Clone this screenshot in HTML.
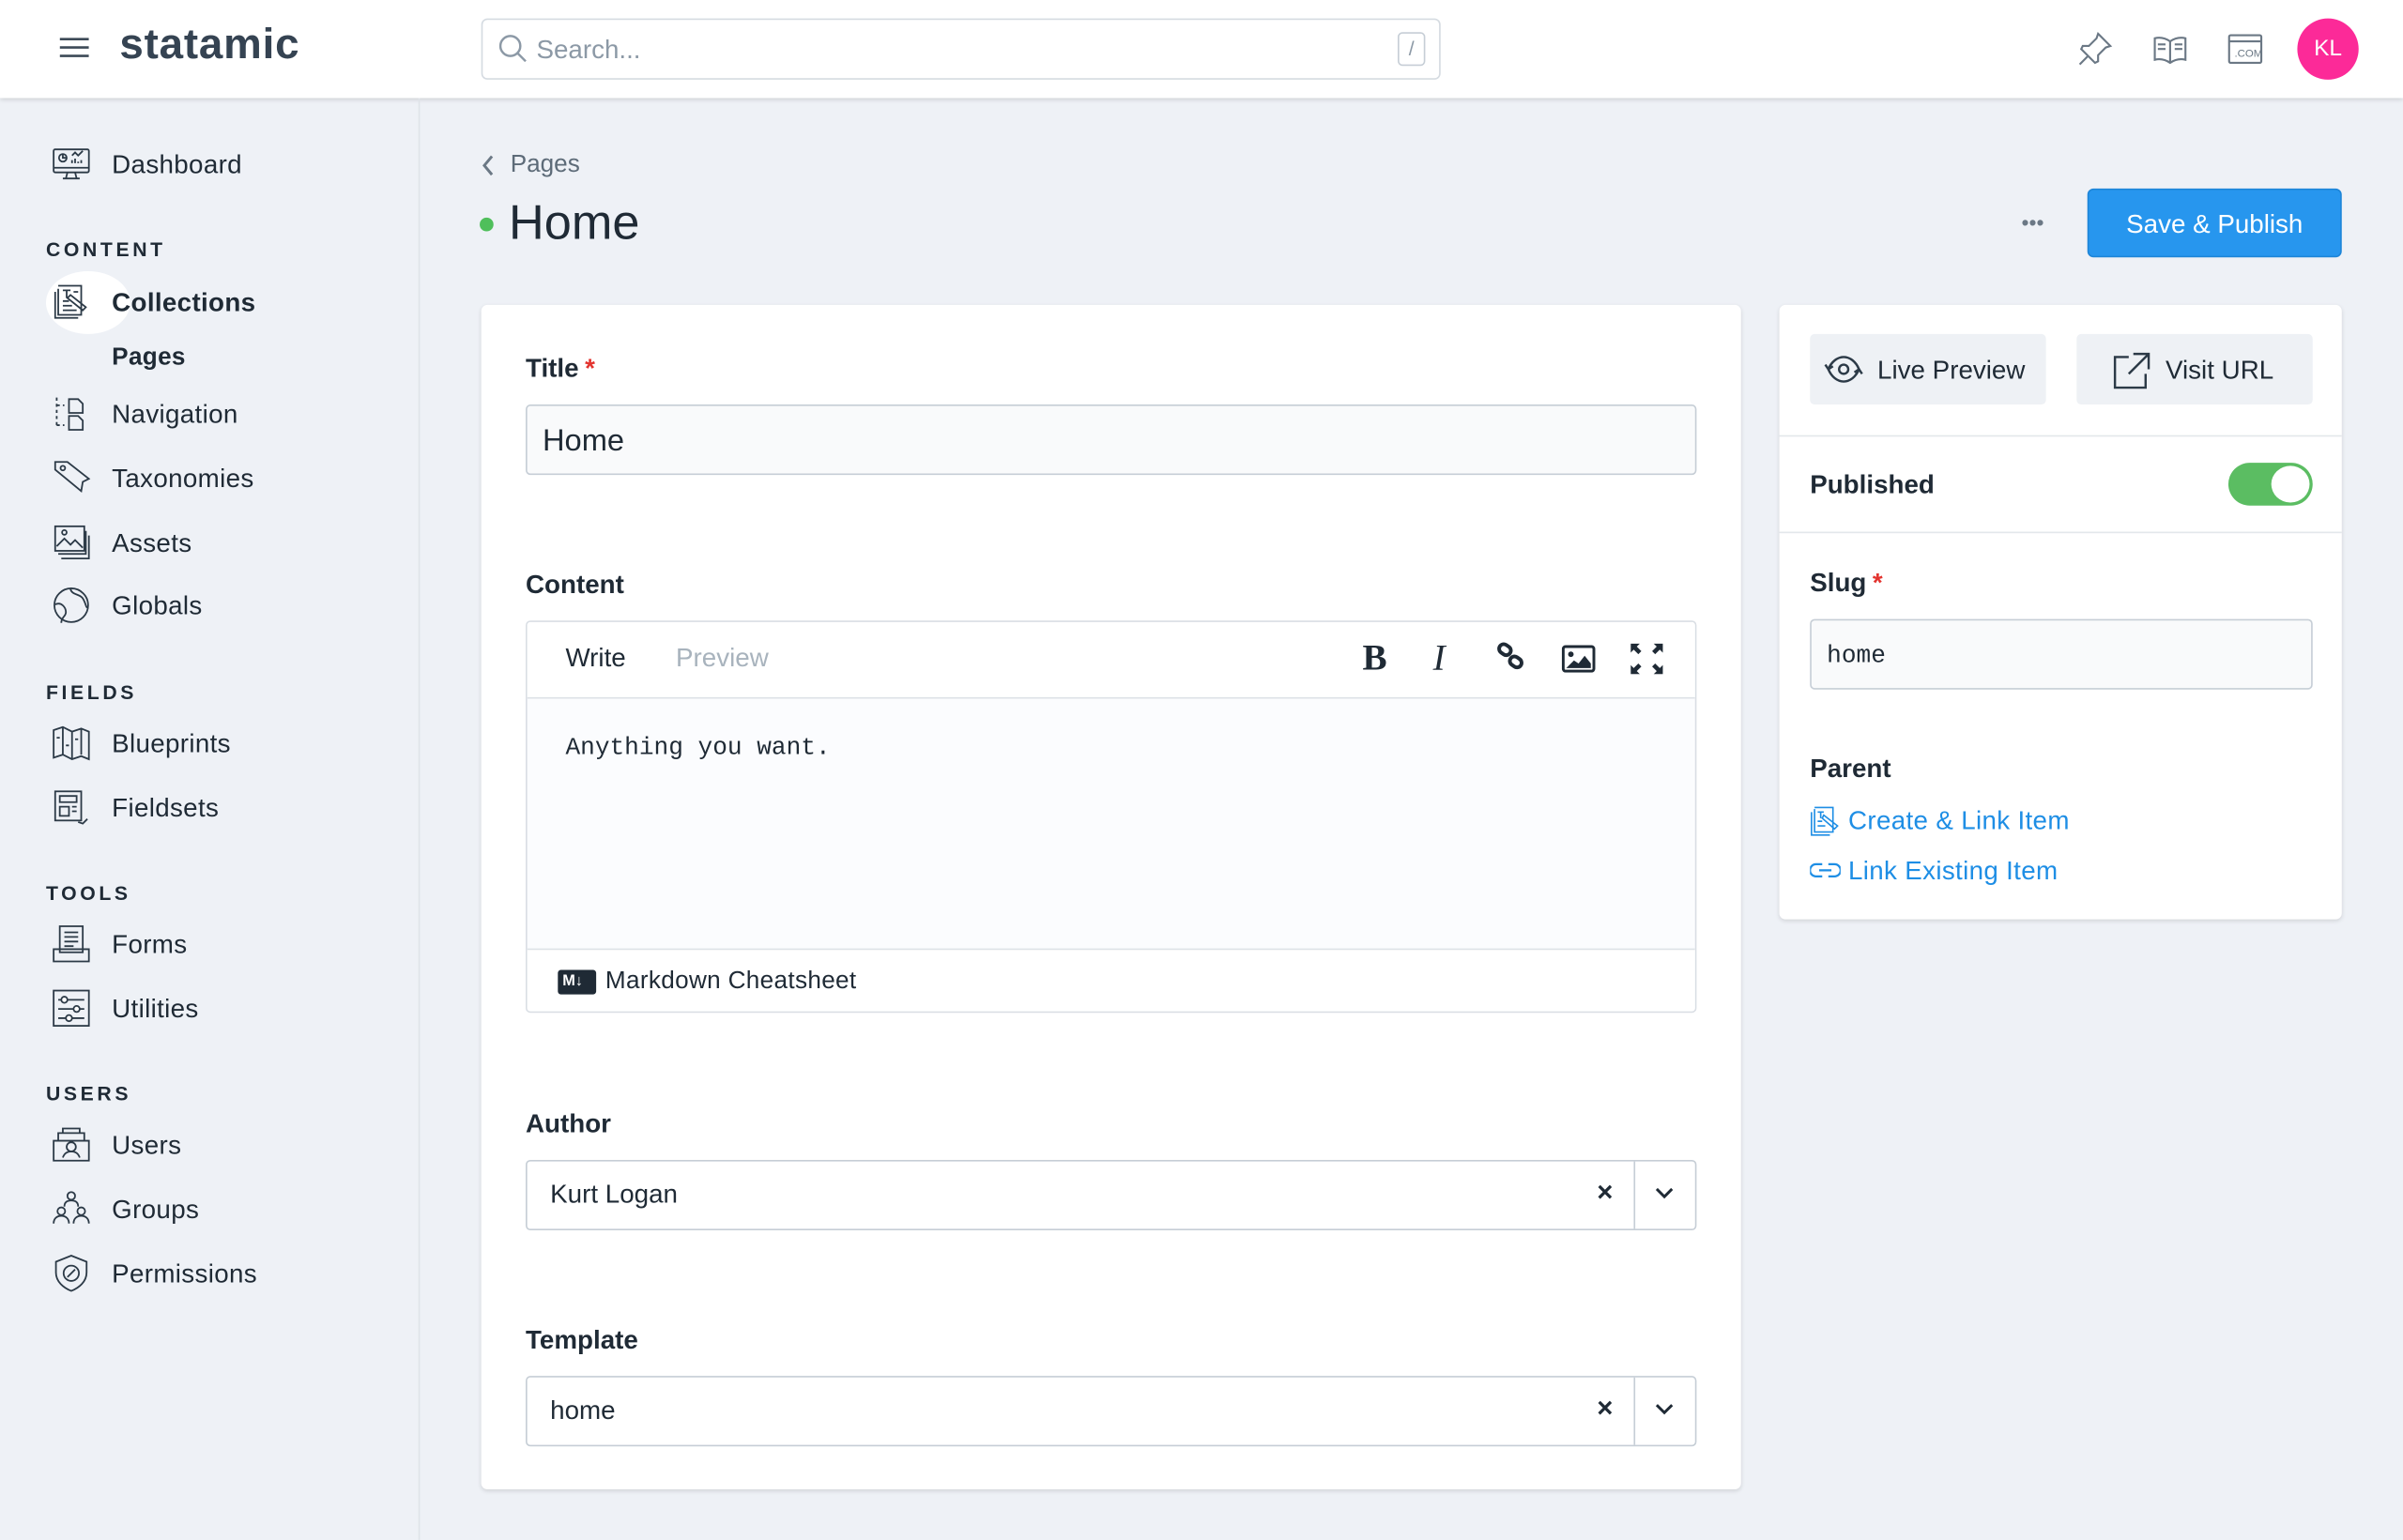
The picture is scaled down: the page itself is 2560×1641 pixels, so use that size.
<!DOCTYPE html>
<html><head><meta charset="utf-8">
<style>
*{box-sizing:border-box;margin:0;padding:0}
html,body{width:2560px;height:1640px;overflow:hidden;background:#eef1f6}
#w{position:absolute;left:0;top:0;width:1568px;height:1005px;transform:scale(1.6327);transform-origin:0 0;font-family:"Liberation Sans",sans-serif;color:#1f2a35;background:#eef1f6}
.a{position:absolute}
.hdr{left:0;top:0;width:1568px;height:64px;background:#fff;box-shadow:0 1px 3px rgba(0,0,0,.15)}
.side{left:273px;top:64px;width:1px;height:941px;background:#dfe3e8}
.ni{position:absolute;left:73px;font-size:17px;color:#1f2a35;transform:translateY(-45%);letter-spacing:.2px}
.sec{position:absolute;left:30px;font-size:13px;font-weight:bold;letter-spacing:2.2px;transform:translateY(-45%)}
.ic{position:absolute;left:34px;width:25px;height:25px;transform:translateY(-50%)}
.lab{position:absolute;font-size:17px;font-weight:bold;transform:translateY(-45%)}
.lab b{color:#e3342f;margin-left:4px}
.card{background:#fff;border-radius:4px;box-shadow:0 1px 3px rgba(0,0,0,.12)}
.inp{position:absolute;border:1px solid #c6ced6;border-radius:3px;background:#f9fafb}
svg{display:block}
</style></head><body><div id="w">
<div class="a hdr"></div>
<svg class="a" style="left:39px;top:24px" width="19" height="14"><path d="M0 1.5H19M0 7H19M0 12.5H19" stroke="#3d4a57" stroke-width="1.6"/></svg>
<div class="a" style="left:78px;top:13px;font-size:28px;font-weight:bold;color:#354352;letter-spacing:.5px">statamic</div>
<div class="a" style="left:314px;top:12px;width:626px;height:40px;border:1px solid #d5dbe1;border-radius:4px;background:#fff"></div>
<svg class="a" style="left:325px;top:22px" width="19" height="19"><circle cx="8" cy="8" r="6.5" fill="none" stroke="#8c99a6" stroke-width="1.5"/><path d="M13 13L18 18" stroke="#8c99a6" stroke-width="1.5"/></svg>
<div class="a" style="left:350px;top:23px;font-size:17px;color:#8c99a6">Search...</div>
<div class="a" style="left:912px;top:21px;width:18px;height:22px;border:1px solid #c6ced6;border-radius:3px;font-size:13px;color:#8c99a6;text-align:center;line-height:20px">/</div>
<svg class="a" style="left:1355px;top:20px" width="24" height="24" fill="none" stroke="#6b7885" stroke-width="1.3"><path d="M14 2l8 8-3 1-5 5 0 4-2 1-9-9 1-2h4l5-5z M7 17l-5 5"/></svg>
<svg class="a" style="left:1404px;top:20px" width="24" height="24" fill="none" stroke="#6b7885" stroke-width="1.3"><path d="M2 5c4-1 7 0 10 2 3-2 6-3 10-2v14c-4-1-7 0-10 2-3-2-6-3-10-2z M12 7v14 M4 9h5M4 12h5M15 9h5M15 12h5"/></svg>
<svg class="a" style="left:1453px;top:20px" width="24" height="24" fill="none" stroke="#6b7885" stroke-width="1.3"><rect x="1.5" y="3" width="21" height="18" rx="1"/><path d="M1.5 7h21"/><text x="5" y="17" font-size="7" fill="#6b7885" stroke="none" font-family="Liberation Sans">.COM</text></svg>
<div class="a" style="left:1499px;top:12px;width:40px;height:40px;border-radius:50%;background:#fc2a98;color:#fff;font-size:15px;text-align:center;line-height:40px">KL</div>

<div class="a side"></div>
<svg class="ic" style="top:107px" viewBox="0 0 25 25" fill="none" stroke="#2c3a47" stroke-width="1.1"><rect x="1" y="3" width="23" height="15" rx="1"/><path d="M1 15h23M10 18l-1 4h7l-1-4M7 22h11"/><circle cx="7" cy="8.5" r="2.5"/><path d="M7 6v2.5h2.5M13 12v-2M15 12v-3M17 12v-1M19 12v-2M13 7l2-2 2 2 3-3"/></svg>
<div class="ni" style="top:107px">Dashboard</div>
<div class="sec" style="top:162px">CONTENT</div>
<div class="a" style="left:30px;top:177px;width:55px;height:41px;border-radius:50%;background:#fff"></div>
<svg class="ic" style="top:197px" viewBox="0 0 25 25" fill="none" stroke="#2c3a47" stroke-width="1.1"><path d="M2 6v17h15M4 4v17h15V2H4M7 5h5M9.5 5v5M14 6h3M7 12h4M7 15h6M7 18h9M12 8l10 8-2 2-10-8z"/></svg>
<div class="ni" style="top:197px;font-weight:bold">Collections</div>
<div class="ni" style="top:233px;font-size:16px;font-weight:bold">Pages</div>
<svg class="ic" style="top:270px" viewBox="0 0 25 25" fill="none" stroke="#2c3a47" stroke-width="1.1"><path d="M3 2v20M3 7h5M3 20h5" stroke-dasharray="2 2"/><path d="M11 3h6l3 3v6h-9zM11 14h6l3 3v6h-9z"/></svg>
<div class="ni" style="top:270px">Navigation</div>
<svg class="ic" style="top:312px" viewBox="0 0 25 25" fill="none" stroke="#2c3a47" stroke-width="1.1"><path d="M2 2h8l14 11-4 2-1 6-17-14z"/><circle cx="7" cy="6" r="1.5"/></svg>
<div class="ni" style="top:312px">Taxonomies</div>
<svg class="ic" style="top:354px" viewBox="0 0 25 25" fill="none" stroke="#2c3a47" stroke-width="1.1"><rect x="2" y="2" width="19" height="16"/><path d="M4 20h18V5M6 23h18V8M3 15l5-5 4 4 3-3 5 5"/><circle cx="8" cy="6" r="1.5"/></svg>
<div class="ni" style="top:354px">Assets</div>
<svg class="ic" style="top:395px" viewBox="0 0 25 25" fill="none" stroke="#2c3a47" stroke-width="1.1"><circle cx="12.5" cy="12.5" r="11"/><path d="M2 12c4-2 7 2 7 5s-3 3-3 7M12 2c1 4 6 3 8 6s2 6 3 6"/></svg>
<div class="ni" style="top:395px">Globals</div>
<div class="sec" style="top:451px">FIELDS</div>
<svg class="ic" style="top:485px" viewBox="0 0 25 25" fill="none" stroke="#2c3a47" stroke-width="1.1"><path d="M1 4l6-2 6 3 6-2 5 2v18l-5-2-6 2-6-3-6 2zM7 2v18M13 5v18M19 3v17M3 9h2M15 10h2M9 14h2"/></svg>
<div class="ni" style="top:485px">Blueprints</div>
<svg class="ic" style="top:527px" viewBox="0 0 25 25" fill="none" stroke="#2c3a47" stroke-width="1.1"><rect x="2" y="2" width="17" height="19"/><path d="M5 5h11v4H5zM5 12h6v6H5zM13 12h3M13 15h3M17 22l3 1 3-3"/></svg>
<div class="ni" style="top:527px">Fieldsets</div>
<div class="sec" style="top:582px">TOOLS</div>
<svg class="ic" style="top:616px" viewBox="0 0 25 25" fill="none" stroke="#2c3a47" stroke-width="1.1"><path d="M5 1h15v17H5zM1 16h23v8H1zM8 5h9M8 8h9M8 11h9M8 14h6"/></svg>
<div class="ni" style="top:616px">Forms</div>
<svg class="ic" style="top:658px" viewBox="0 0 25 25" fill="none" stroke="#2c3a47" stroke-width="1.1"><rect x="1" y="1" width="23" height="23"/><path d="M4 7h17M4 13h17M4 19h17"/><circle cx="8" cy="7" r="2" fill="#fff"/><circle cx="16" cy="13" r="2" fill="#fff"/><circle cx="11" cy="19" r="2" fill="#fff"/></svg>
<div class="ni" style="top:658px">Utilities</div>
<div class="sec" style="top:713px">USERS</div>
<svg class="ic" style="top:747px" viewBox="0 0 25 25" fill="none" stroke="#2c3a47" stroke-width="1.1"><path d="M1 10h23v13H1zM4 10V5h17v5M7 5V2h11v3"/><circle cx="12.5" cy="14" r="3"/><path d="M7 21c1-3 3-4 5.5-4s4.5 1 5.5 4"/></svg>
<div class="ni" style="top:747px">Users</div>
<svg class="ic" style="top:789px" viewBox="0 0 25 25" fill="none" stroke="#2c3a47" stroke-width="1.1"><circle cx="12.5" cy="4" r="2.5"/><path d="M8 11c0-3 2-4 4.5-4s4.5 1 4.5 4"/><circle cx="6" cy="14" r="2.5"/><circle cx="19" cy="14" r="2.5"/><path d="M1 22c0-3 2-5 5-5s5 2 5 5M14 22c0-3 2-5 5-5s5 2 5 5"/></svg>
<div class="ni" style="top:789px">Groups</div>
<svg class="ic" style="top:831px" viewBox="0 0 25 25" fill="none" stroke="#2c3a47" stroke-width="1.1"><path d="M12.5 1l10 4v7c0 6-5 10-10 12C7.5 22 2.5 18 2.5 12V5z"/><circle cx="12.5" cy="12.5" r="5"/><path d="M10 15l5-5"/></svg>
<div class="ni" style="top:831px">Permissions</div>

<svg class="a" style="left:314px;top:101px" width="9" height="14"><path d="M7 1L2 7l5 6" fill="none" stroke="#6b7885" stroke-width="1.8"/></svg>
<div class="a" style="left:333px;top:99px;font-size:16px;color:#5d6b78">Pages</div>
<div class="a" style="left:313px;top:142px;width:9px;height:9px;border-radius:50%;background:#4fbf5b"></div>
<div class="a" style="left:332px;top:127px;font-size:32px;color:#1f2a35">Home</div>
<div class="a" style="left:1319px;top:137px;font-size:14px;color:#6b7885;letter-spacing:0px">•••</div>
<div class="a" style="left:1362px;top:123px;width:166px;height:45px;background:#2796ee;border:1px solid #1d85d8;border-radius:4px;color:#fff;font-size:17px;text-align:center;line-height:45px">Save &amp; Publish</div>

<div class="a card" style="left:314px;top:199px;width:822px;height:773px"></div>
<div class="lab" style="left:343px;top:240px">Title<b>*</b></div>
<div class="inp" style="left:343px;top:264px;width:764px;height:46px"></div>
<div class="a" style="left:354px;top:277px;font-size:20px">Home</div>
<div class="lab" style="left:343px;top:381px">Content</div>
<div class="a" style="left:343px;top:405px;width:764px;height:256px;border:1px solid #d9dee4;border-radius:3px;background:#fbfcfe;overflow:hidden">
  <div class="a" style="left:0;top:0;width:764px;height:50px;background:#fff;border-bottom:1px solid #dde2e7"></div>
  <div class="a" style="left:0;top:213px;width:764px;height:43px;background:#fff;border-top:1px solid #dde2e7"></div>
</div>
<div class="a" style="left:369px;top:420px;font-size:17px">Write</div>
<div class="a" style="left:441px;top:420px;font-size:17px;color:#a8b3bd">Preview</div>
<div class="a" style="left:889px;top:417px;font-family:'Liberation Serif',serif;font-weight:bold;font-size:24px;color:#1f2a35">B</div>
<div class="a" style="left:935px;top:417px;font-family:'Liberation Serif',serif;font-style:italic;font-size:24px;color:#1f2a35">I</div>
<svg class="a" style="left:976px;top:419px" width="20" height="20" fill="none" stroke="#1f2a35" stroke-width="2.4"><rect x="2" y="2" width="8" height="6" rx="3" transform="rotate(35 6 5)"/><rect x="9" y="10" width="8" height="6" rx="3" transform="rotate(35 13 13)"/></svg>
<svg class="a" style="left:1019px;top:421px" width="22" height="18"><rect x="1" y="1" width="20" height="16" rx="1.5" fill="none" stroke="#1f2a35" stroke-width="1.8"/><circle cx="6" cy="6" r="1.8" fill="#1f2a35"/><path d="M3 15l5-5 3 2 4-5 4 5v3z" fill="#1f2a35"/></svg>
<svg class="a" style="left:1064px;top:420px" width="21" height="20" fill="#1f2a35"><path d="M0 0h6L4 2l3 3-2 2-3-3-2 2zM21 0h-6l2 2-3 3 2 2 3-3 2 2zM0 20h6l-2-2 3-3-2-2-3 3-2-2zM21 20h-6l2-2-3-3 2-2 3 3 2-2z"/></svg>
<div class="a" style="left:369px;top:479px;font-family:'Liberation Mono',monospace;font-size:16px">Anything you want.</div>
<div class="a" style="left:364px;top:633px;width:25px;height:16px;background:#1f2a35;border-radius:2px;color:#fff;font-size:10px;font-weight:bold;line-height:16px;padding-left:3px">M↓</div>
<div class="a" style="left:395px;top:632px;font-size:16px;letter-spacing:.2px">Markdown Cheatsheet</div>

<div class="lab" style="left:343px;top:733px">Author</div>
<div class="inp" style="left:343px;top:757px;width:764px;height:46px;background:#fff"></div>
<div class="a" style="left:1066px;top:758px;width:1px;height:44px;background:#c6ced6"></div>
<div class="a" style="left:359px;top:770px;font-size:17px">Kurt Logan</div>
<div class="a" style="left:1042px;top:768px;font-size:18px;font-weight:bold">×</div>
<svg class="a" style="left:1080px;top:775px" width="12" height="8"><path d="M1 1l5 5 5-5" fill="none" stroke="#1f2a35" stroke-width="1.8"/></svg>

<div class="lab" style="left:343px;top:874px">Template</div>
<div class="inp" style="left:343px;top:898px;width:764px;height:46px;background:#fff"></div>
<div class="a" style="left:1066px;top:899px;width:1px;height:44px;background:#c6ced6"></div>
<div class="a" style="left:359px;top:911px;font-size:17px">home</div>
<div class="a" style="left:1042px;top:909px;font-size:18px;font-weight:bold">×</div>
<svg class="a" style="left:1080px;top:916px" width="12" height="8"><path d="M1 1l5 5 5-5" fill="none" stroke="#1f2a35" stroke-width="1.8"/></svg>

<div class="a card" style="left:1161px;top:199px;width:367px;height:401px"></div>
<div class="a" style="left:1181px;top:218px;width:154px;height:46px;background:#eef1f5;border-radius:3px"></div>
<svg class="a" style="left:1190px;top:230px" width="26" height="22" fill="none" stroke="#2c3a47" stroke-width="1.5"><path d="M3 11c2-5 6-8 10-8s8 3 10 8c-2 5-6 8-10 8s-8-3-10-8z"/><circle cx="13" cy="11" r="3"/><path d="M1 8l2 3 3-2M25 14l-2-3-3 2"/></svg>
<div class="a" style="left:1225px;top:232px;font-size:17px">Live Preview</div>
<div class="a" style="left:1355px;top:218px;width:154px;height:46px;background:#eef1f5;border-radius:3px"></div>
<svg class="a" style="left:1378px;top:229px" width="26" height="26" fill="none" stroke="#2c3a47" stroke-width="1.5"><path d="M11 4H2v20h20v-9M14 2h10v10M24 2L11 15"/></svg>
<div class="a" style="left:1413px;top:232px;font-size:17px">Visit URL</div>
<div class="a" style="left:1161px;top:284px;width:367px;height:1px;background:#e3e7eb"></div>
<div class="lab" style="left:1181px;top:316px">Published</div>
<div class="a" style="left:1454px;top:302px;width:55px;height:28px;border-radius:14px;background:#5bbd62"></div>
<div class="a" style="left:1482px;top:304px;width:25px;height:24px;border-radius:50%;background:#fff"></div>
<div class="a" style="left:1161px;top:347px;width:367px;height:1px;background:#e3e7eb"></div>
<div class="lab" style="left:1181px;top:380px">Slug<b>*</b></div>
<div class="inp" style="left:1181px;top:404px;width:328px;height:46px"></div>
<div class="a" style="left:1192px;top:419px;font-family:'Liberation Mono',monospace;font-size:16px">home</div>
<div class="lab" style="left:1181px;top:501px">Parent</div>
<svg class="a" style="left:1181px;top:526px" width="19" height="20" fill="none" stroke="#1e8ee5" stroke-width="1"><path d="M1 4v15h12M3 2v15h12V1H3M5 4h4M7 4v4M5 10h3M5 13h5M9 6l9 7-2 2-8-7z"/></svg>
<div class="a" style="left:1206px;top:526px;font-size:17px;color:#1e8ee5;letter-spacing:.2px">Create &amp; Link Item</div>
<svg class="a" style="left:1181px;top:562px" width="20" height="12" fill="none" stroke="#1e8ee5" stroke-width="1.4"><path d="M8 2H4a4 4 0 000 8h4M12 2h4a4 4 0 010 8h-4M6 6h8"/></svg>
<div class="a" style="left:1206px;top:559px;font-size:17px;color:#1e8ee5;letter-spacing:.2px">Link Existing Item</div>
</div></body></html>
